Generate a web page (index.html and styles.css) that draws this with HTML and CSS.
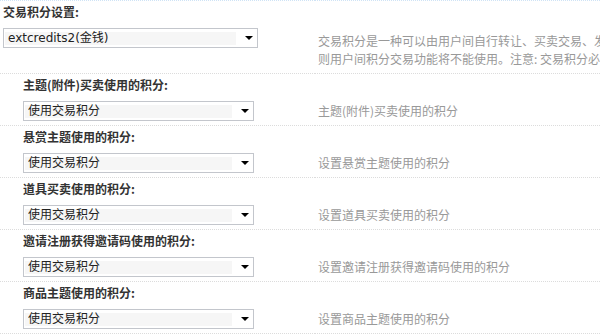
FILE: index.html
```html
<!DOCTYPE html>
<html lang="zh-CN">
<head>
  <meta charset="UTF-8" />
  <title>交易积分设置</title>
  <link rel="stylesheet" href="styles.css">
</head>
<body>
  <table class="tb">
    <colgroup>
      <col class="col-field">
      <col class="col-tips">
    </colgroup>
    <tr class="label-row first">
      <td colspan="2" class="label">交易积分设置:</td>
    </tr>
    <tr class="field-row">
      <td class="rowform">
        <span class="select-wrap wide">
          <select>
            <option>extcredits2(金钱)</option>
          </select>
        </span>
      </td>
      <td class="tips tips-multi">交易积分是一种可以由用户间自行转让、买卖交易、发生积分交易的积分类型，您可以指定一种积分作为交易积分。如果不指定交易积分，<br>则用户间积分交易功能将不能使用。注意: 交易积分必须是已启用的积分，一旦确定请尽量不要更改，否则以往记录及交易可能会产生问题。</td>
    </tr>

    <tr class="label-row">
      <td colspan="2" class="label sub">主题(附件)买卖使用的积分:</td>
    </tr>
    <tr class="field-row">
      <td class="rowform sub">
        <span class="select-wrap"><select><option>使用交易积分</option></select></span>
      </td>
      <td class="tips">主题(附件)买卖使用的积分</td>
    </tr>

    <tr class="label-row">
      <td colspan="2" class="label sub">悬赏主题使用的积分:</td>
    </tr>
    <tr class="field-row">
      <td class="rowform sub">
        <span class="select-wrap"><select><option>使用交易积分</option></select></span>
      </td>
      <td class="tips">设置悬赏主题使用的积分</td>
    </tr>

    <tr class="label-row">
      <td colspan="2" class="label sub">道具买卖使用的积分:</td>
    </tr>
    <tr class="field-row">
      <td class="rowform sub">
        <span class="select-wrap"><select><option>使用交易积分</option></select></span>
      </td>
      <td class="tips">设置道具买卖使用的积分</td>
    </tr>

    <tr class="label-row">
      <td colspan="2" class="label sub">邀请注册获得邀请码使用的积分:</td>
    </tr>
    <tr class="field-row">
      <td class="rowform sub">
        <span class="select-wrap"><select><option>使用交易积分</option></select></span>
      </td>
      <td class="tips">设置邀请注册获得邀请码使用的积分</td>
    </tr>

    <tr class="label-row">
      <td colspan="2" class="label sub">商品主题使用的积分:</td>
    </tr>
    <tr class="field-row last">
      <td class="rowform sub">
        <span class="select-wrap"><select><option>使用交易积分</option></select></span>
      </td>
      <td class="tips">设置商品主题使用的积分</td>
    </tr>
  </table>
</body>
</html>
```

FILE: styles.css
```css
body {
  margin: 0;
  overflow: hidden;
  background: #fff;
  font: 12px/18px "DejaVu Sans", "Noto Sans CJK SC", sans-serif;
  color: #333;
}

.tb {
  width: 900px;
  table-layout: fixed;
  border-collapse: collapse;
}

.col-field {
  width: 315px;
}

.tb td {
  padding: 0 3px;
}

.label-row td {
  border-top: 1px dotted #dcdcdc;
  padding: 2px 3px 3px;
  line-height: 18px;
}

.label-row.first td {
  border-top-color: #cfe3f5;
}

.field-row.last td {
  border-bottom: 1px dotted #dcdcdc;
}

.label {
  font-family: "Noto Sans CJK SC", sans-serif;
  font-weight: bold;
  color: #333;
}

.tb td.sub {
  padding-left: 23px;
}

.rowform {
  vertical-align: top;
}

.field-row .rowform {
  padding-top: 4px;
  padding-bottom: 4px;
}

.select-wrap {
  position: relative;
  display: block;
  width: 231px;
}

.select-wrap.wide {
  width: 255px;
}

.select-wrap::after {
  content: "";
  position: absolute;
  right: 5px;
  top: 8px;
  border-left: 4px solid transparent;
  border-right: 4px solid transparent;
  border-top: 4px solid #000;
}

.select-wrap select {
  display: block;
  width: 100%;
  height: 20px;
  margin: 0;
  padding: 0 0 0 4px;
  -webkit-appearance: none;
  appearance: none;
  border: 1px solid #c3c6cc;
  border-radius: 0;
  background-color: #fff;
  background-image: linear-gradient(#f6f6f6, #f6f6f6);
  background-size: calc(100% - 22px) 13px;
  background-position: 1px center;
  background-repeat: no-repeat;
  font: 12px "DejaVu Sans", "Noto Sans CJK SC", sans-serif;
  color: #222;
  line-height: 18px;
}

.tips {
  vertical-align: middle;
  color: #999;
  font-family: "Noto Sans CJK SC", sans-serif;
  line-height: 18px;
  white-space: nowrap;
  overflow: hidden;
}

.field-row .tips {
  padding: 4px 3px 4px;
}

.field-row .tips-multi {
  vertical-align: top;
  padding: 8px 3px 5px;
}
```
